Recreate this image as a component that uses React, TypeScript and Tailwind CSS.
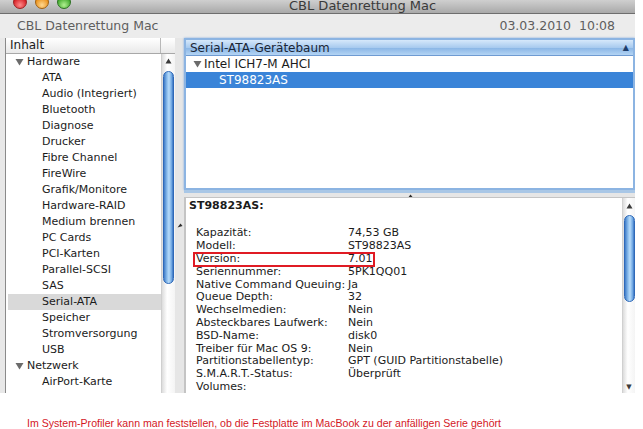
const sidebar = [
  { name: "Hardware", group: true },
  { name: "ATA" },
  { name: "Audio (Integriert)" },
  { name: "Bluetooth" },
  { name: "Diagnose" },
  { name: "Drucker" },
  { name: "Fibre Channel" },
  { name: "FireWire" },
  { name: "Grafik/Monitore" },
  { name: "Hardware-RAID" },
  { name: "Medium brennen" },
  { name: "PC Cards" },
  { name: "PCI-Karten" },
  { name: "Parallel-SCSI" },
  { name: "SAS" },
  { name: "Serial-ATA", selected: true },
  { name: "Speicher" },
  { name: "Stromversorgung" },
  { name: "USB" },
  { name: "Netzwerk", group: true },
  { name: "AirPort-Karte" },
];

const props = [
  ["Kapazität:", "74,53 GB"],
  ["Modell:", "ST98823AS"],
  ["Version:", "7.01"],
  ["Seriennummer:", "5PK1QQ01"],
  ["Native Command Queuing:", "Ja"],
  ["Queue Depth:", "32"],
  ["Wechselmedien:", "Nein"],
  ["Absteckbares Laufwerk:", "Nein"],
  ["BSD-Name:", "disk0"],
  ["Treiber für Mac OS 9:", "Nein"],
  ["Partitionstabellentyp:", "GPT (GUID Partitionstabelle)"],
  ["S.M.A.R.T.-Status:", "Überprüft"],
  ["Volumes:", ""],
];

const Tri = ({ className = "" }: { className?: string }) => (
  <svg width="9" height="8" viewBox="0 0 9 8" className={className}>
    <path d="M0.5 1 L8.5 1 L4.5 7.5 Z" fill="#6b6b6b" />
  </svg>
);

const UpArrow = () => (
  <svg width="7" height="6" viewBox="0 0 7 6">
    <path d="M3.5 0.5 L6.5 5.5 L0.5 5.5 Z" fill="#3b3b3b" />
  </svg>
);

// little splitter grip, a slanted caret
const Grip = () => (
  <svg width="6" height="5" viewBox="0 0 6 5">
    <path d="M0.5 4.5 L3.5 0.5 L5.5 3 Z" fill="#2d2d2d" />
  </svg>
);

const Thumb = ({ h }: { h: string }) => (
  <div
    className={`${h} mx-auto w-[11px] rounded-full border border-[#2f69b8] bg-[linear-gradient(90deg,#3f7cc8_0%,#8fc0ee_35%,#b8dcfa_55%,#6ea6e2_85%,#3a74c2_100%)]`}
  />
);

export default function App() {
  return (
    <div className="w-[643px] h-[429px] bg-white overflow-hidden font-['DejaVu_Sans',sans-serif] text-[11px] text-[#1b1b1b]">
      <div className="w-[635px] h-[393px] bg-[#e8e8e8] flex flex-col overflow-hidden">
        {/* title bar */}
        <div className="h-[14px] shrink-0 flex items-end bg-[linear-gradient(#cfcfcf,#a9a9a9)] border-b border-[#6e6e6e] overflow-hidden">
          <div className="flex gap-[8px] pl-[13px] mb-[4px]">
            <div className="w-[14px] h-[14px] rounded-full bg-[radial-gradient(circle_at_50%_75%,#ff8a8a,#d2171d_70%)] border border-[#9a2020]" />
            <div className="w-[14px] h-[14px] rounded-full bg-[radial-gradient(circle_at_50%_75%,#ffd890,#e98c12_70%)] border border-[#a06010]" />
            <div className="w-[14px] h-[14px] rounded-full bg-[radial-gradient(circle_at_50%_75%,#b0f090,#3aa426_70%)] border border-[#2a7020]" />
          </div>
          <div className="ml-[218px] mb-[1px] text-[13px] leading-[13px] text-[#3a3a3a]">
            CBL Datenrettung Mac
          </div>
        </div>

        {/* toolbar */}
        <div className="h-[24px] shrink-0 flex items-center justify-between pl-[17px] pr-[20px] bg-[#ececec] text-[#5e5e5e] text-[12.5px]">
          <span>CBL Datenrettung Mac</span>
          <span>03.03.2010&nbsp;&nbsp;10:08</span>
        </div>

        {/* main */}
        <div className="flex-1 flex pl-[5px] min-h-0">
          {/* left pane */}
          <div className="w-[170px] shrink-0 flex flex-col bg-white border-l border-[#8a8a8a]">
            <div className="h-[16px] shrink-0 flex border-b border-[#a8a8a8] bg-[linear-gradient(#ffffff,#e9e9e9)]">
              <div className="w-[155px] pl-[4px] leading-[15px] text-[12px] border-r border-[#b8b8b8]">Inhalt</div>
              <div className="flex-1" />
            </div>
            <div className="flex-1 flex min-h-0">
              <div className="w-[155px] shrink-0">
                {sidebar.map((it) =>
                  it.group ? (
                    <div key={it.name} className="h-[16px] flex items-center pl-[9px] gap-[3px]">
                      <Tri />
                      <span>{it.name}</span>
                    </div>
                  ) : (
                    <div
                      key={it.name}
                      className={`h-[16px] flex items-center ${it.selected ? "bg-[#d9d9d9] ml-[2px] pl-[34px]" : "pl-[36px]"}`}
                    >
                      {it.name}
                    </div>
                  )
                )}
              </div>
              <div className="flex-1 flex flex-col items-center pt-[4px] border-l border-[#cfcfcf] bg-[linear-gradient(90deg,#dcdcdc,#ffffff_40%,#f4f4f4)]">
                <UpArrow />
                <div className="h-[7px]" />
                <Thumb h="h-[213px]" />
              </div>
            </div>
          </div>

          {/* vertical splitter */}
          <div className="w-[9px] shrink-0 flex flex-col items-center pt-[185px] bg-[#e6e6e6]">
            <Grip />
          </div>

          {/* right column */}
          <div className="flex-1 flex flex-col min-w-0">
            <div className="h-[152px] shrink-0 flex flex-col bg-white border-2 border-[#8cb4e2] shadow-[0_0_2px_#7fa9dd]">
              <div className="h-[16px] shrink-0 flex items-center justify-between pl-[4px] pr-[4px] border-b border-[#6f9bd2] bg-[linear-gradient(#d6e8fa,#a9cbef_50%,#8cb7e6_55%,#b3d4f4)] text-[12px] text-[#1a2636]">
                <span>Serial-ATA-Gerätebaum</span>
                <span className="text-[8px] text-[#1f3e6b]">▲</span>
              </div>
              <div className="h-[16px] flex items-center pl-[7px] gap-[2px] text-[12px]">
                <Tri />
                <span>Intel ICH7-M AHCI</span>
              </div>
              <div className="h-[16px] flex items-center pl-[33px] bg-[#3a84d8] text-white text-[12px]">
                ST98823AS
              </div>
            </div>

            {/* horizontal splitter */}
            <div className="h-[7px] shrink-0 flex justify-center pt-[1px] bg-[#e6e6e6] border-t-[3px] border-[#a9c7e6]">
              <Grip />
            </div>

            {/* detail pane */}
            <div className="flex-1 flex min-h-0 bg-white border-l-2 border-t border-[#c4c4c4]">
              <div className="flex-1 pl-[3px] pt-[1px]">
                <div className="h-[14px] leading-[14px] font-bold text-[11px]">ST98823AS:</div>
                <div className="h-[14px]" />
                <div className="pl-[7px]">
                  {props.map(([k, v]) => (
                    <div key={k} className="h-[12.8px] leading-[12px] flex items-center relative">
                      <span className="w-[152px] shrink-0">{k}</span>
                      <span>{v}</span>
                      {k === "Version:" && (
                        <span className="absolute left-[-3px] top-[-1px] w-[182px] h-[15px] border-2 border-[#e01b24]" />
                      )}
                    </div>
                  ))}
                </div>
              </div>
              <div className="w-[13px] shrink-0 flex flex-col items-center pt-[5px] pb-[2px] border-l border-[#d0d0d0] bg-[linear-gradient(90deg,#dcdcdc,#ffffff_40%,#f4f4f4)]">
                <UpArrow />
                <div className="h-[6px]" />
                <Thumb h="h-[87px]" />
                <div className="flex-1" />
                <span className="text-[7px] leading-[7px] text-[#3b3b3b]">▼</span>
              </div>
            </div>
          </div>
        </div>
      </div>

      <div className="pt-[24px] pl-[27px] font-['Liberation_Sans',Arial,sans-serif] text-[10.6px] leading-[12px] text-[#d4181f]">
        Im System-Profiler kann man feststellen, ob die Festplatte im MacBook zu der anfälligen Serie gehört
      </div>
    </div>
  );
}
